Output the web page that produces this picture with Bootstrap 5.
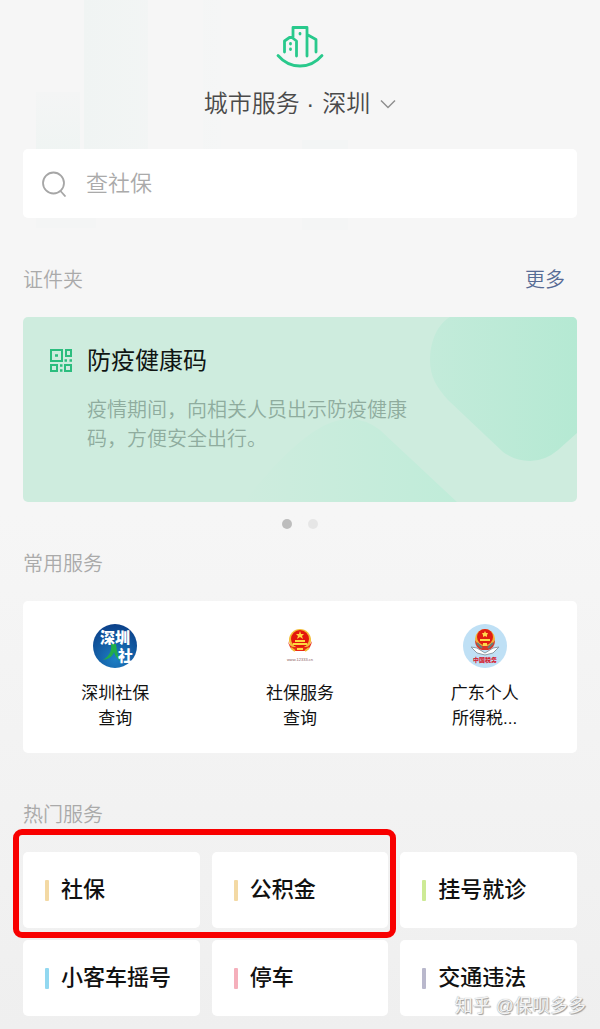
<!DOCTYPE html>
<html lang="zh-CN">
<head>
<meta charset="utf-8">
<meta name="viewport" content="width=device-width, initial-scale=1">
<title>城市服务</title>
<link href="https://cdn.jsdelivr.net/npm/bootstrap@5.3.0/dist/css/bootstrap.min.css" rel="stylesheet">
<style>
  body {
    font-family: "Liberation Sans", "Noto Sans CJK SC", sans-serif;
    font-weight: 350;
    color: #111;
    background: linear-gradient(#f6f6f6, #f6f6f6 50%, #efefef);
    min-height: 100vh;
  }
  .page { padding: 0 23px 12px; }
  .skyline { top: 0; left: 0; height: 240px; }
  .masthead { padding-top: 25px; }
  .city { font-size: 24px; line-height: 36px; color: #4a4a4a; margin: 18px 0 27px; }
  .city .form-select {
    width: auto; font: inherit; color: inherit; background-color: transparent;
    padding: 0 26px 0 8px; border: 0;
    background-image: url("data:image/svg+xml,%3Csvg xmlns='http://www.w3.org/2000/svg' viewBox='0 0 16 16'%3E%3Cpath d='M1 4.5l7 7 7-7' fill='none' stroke='%23909090' stroke-width='1.5'/%3E%3C/svg%3E");
    background-size: 16px; background-position: right 0 center;
  }
  .tile { background: #fff; border-radius: 5px; }
  .search { height: 69px; padding: 0 19px; gap: 19px; }
  .search .form-control { font-size: 22px; font-weight: 350; line-height: 36px; color: #333; box-shadow: none; }
  .search .form-control::placeholder { color: #aaa; }
  .section-head { font-size: 20px; line-height: 30px; color: #aaa; font-weight: 350; padding-bottom: 22px; }
  .wallet-head { padding-top: 47px; }
  .more { font-size: 20px; line-height: 30px; color: #576b95; padding-right: 12px; }
  .pass { background: #ceecde; border-radius: 5px; height: 185px; padding: 26px; gap: 14px; }
  .pass-title { font-size: 24px; line-height: 36px; font-weight: 400; color: #101513; }
  .pass-text { font-size: 20px; line-height: 29px; color: #8fac9e; max-width: 330px; margin: 17px 0 0; }
  .dots { padding: 17px 0 20px; }
  .dot { width: 10px; height: 10px; border: 0; padding: 0; border-radius: 50%; background: #e6e6e6; }
  .dot.active { background: #bdbdbd; }
  .often { padding: 22px 0; margin-bottom: 47px; }
  .often a { font-size: 17px; line-height: 25px; color: #111; font-weight: 400; }
  .often svg { margin-bottom: 12px; }
  .hot { grid-template-columns: repeat(3, 1fr); gap: 12px; }
  .hot .tile { height: 76px; padding-left: 22px; gap: 12px; font-size: 22px; line-height: 32px; font-weight: 500; color: #111; }
  .bar { width: 4px; height: 21px; border-radius: 1px; }
  .sand { background: #f3d9a4; }
  .lime { background: #cdea95; }
  .sky { background: #92d8f0; }
  .rose { background: #f5afbb; }
  .lilac { background: #b9b8cc; }
  .marked { grid-area: 1 / 1 / 2 / 3; inset: -23px -8px -10px -10px; border: 6px solid #f80000; border-radius: 9px; pointer-events: none; }
  .credit { right: 14px; bottom: 8px; font-size: 18px; line-height: 28px; font-weight: 400; color: #f4f4f4; text-shadow: 1px 1px 1px #999, 0 0 1px #999; }
</style>
</head>
<body>
<div class="page position-relative">
  <svg class="skyline position-absolute w-100" viewBox="0 0 600 240" preserveAspectRatio="none" aria-hidden="true">
    <defs>
      <linearGradient id="haze" x2="0" y2="1"><stop stop-color="#f4f5f5"/><stop offset="1" stop-color="#eef4f2"/></linearGradient>
      <linearGradient id="hazeSide"><stop stop-color="#f0f4f3"/><stop offset="1" stop-color="#f5f6f6"/></linearGradient>
    </defs>
    <path d="M36 92h44v78H36z" fill="url(#haze)"/>
    <path d="M84 0h64v170H84zM203 0h18v170h-18z" fill="url(#hazeSide)"/>
    <path d="M302 140h46v30h-46zM350 170q20-17 60-17t60 17z" fill="#f3f5f5"/>
    <path d="M302 218h46v12h-46zM36 218h60v10H36z" fill="#f4f5f5"/>
  </svg>

  <header class="masthead position-relative text-center">
    <svg class="d-block mx-auto" width="48" height="43" viewBox="0 0 48 43" fill="none" stroke="#29c98c" stroke-width="2.800" stroke-linecap="round" stroke-linejoin="round" aria-hidden="true">
      <path d="M2 30.500Q11 41 24 41T46 30.500"/>
      <path d="M8.500 27V16l5-3.500h2.500L20.500 16v15M17 12V2.500h14V31M31 9.500l9 5V27"/>
      <path d="M14.500 18.500v.5M14.500 24v.5M24 8.500v.5"/>
    </svg>
    <div class="city d-flex justify-content-center align-items-center">
      <label for="city">城市服务 ·</label>
      <select id="city" class="form-select"><option>深圳</option><option>广州</option></select>
    </div>
    <form class="search tile d-flex align-items-center">
      <label for="q" class="d-flex">
        <svg width="25" height="26" viewBox="0 0 25 26" fill="none" stroke="#a6a6a6" stroke-width="1.800" role="img" aria-label="搜索"><circle cx="11.500" cy="12" r="10.500"/><path d="M18.500 20l5 5.500"/></svg>
      </label>
      <input id="q" type="text" class="form-control border-0 p-0 bg-transparent" placeholder="查社保">
    </form>
  </header>

  <main>
    <section>
      <div class="wallet-head d-flex justify-content-between">
        <h2 class="section-head mb-0">证件夹</h2>
        <a class="more text-decoration-none" href="#">更多</a>
      </div>
      <div class="pass position-relative overflow-hidden d-flex">
        <svg class="position-absolute top-0 end-0 h-100" viewBox="0 0 554 185" preserveAspectRatio="xMaxYMid meet" aria-hidden="true">
          <defs>
            <linearGradient id="leaf"><stop stop-color="#c3ebda"/><stop offset="1" stop-color="#b5e9d3"/></linearGradient>
            <linearGradient id="hill"><stop stop-color="#ceecde"/><stop offset="1" stop-color="#c0ecd9"/></linearGradient>
          </defs>
          <path d="M427 0C412 9 407 28 407 43c0 17 7 28 18 40l55 52q12 9 27 9t28-11l19-17V0z" fill="url(#leaf)"/>
          <path d="M357 113l77 72H220C250 150 290 102 326 102q17 0 31 11z" fill="url(#hill)"/>
        </svg>
        <svg class="position-relative flex-shrink-0 mt-1" width="24" height="26" viewBox="0 0 24 26" fill="none" stroke="#2bbd7e" stroke-width="2" aria-hidden="true">
          <path d="M2 3h11v11H2zM17 3h5v6h-5zM2 18h6v6H2zM16 18h6v6h-6z"/>
          <path d="M6 8.500h3M15.500 13.500h2.500M20.500 13.500h2.500M11 18.500h2.500M11 23.500h2.500" stroke-width="2.500"/>
        </svg>
        <div class="position-relative">
          <h3 class="pass-title m-0 text-nowrap">防疫健康码</h3>
          <p class="pass-text">疫情期间，向相关人员出示防疫健康码，方便安全出行。</p>
        </div>
      </div>
      <div class="dots d-flex justify-content-center gap-3">
        <button type="button" class="dot active" aria-label="第一页"></button>
        <button type="button" class="dot" aria-label="第二页"></button>
      </div>
    </section>

    <section>
      <h2 class="section-head mb-0">常用服务</h2>
      <div class="often tile row gx-0 text-center">
        <a class="col text-decoration-none" href="#">
          <svg class="d-block mx-auto" width="46" height="46" viewBox="0 0 46 46" aria-hidden="true">
            <defs><radialGradient id="sea" cx=".5" cy=".8" r=".8"><stop stop-color="#1d7fc4"/><stop offset="1" stop-color="#0b4089"/></radialGradient></defs>
            <circle cx="23" cy="23" r="22" fill="url(#sea)"/>
            <path d="M19 21h5c1 8 2 11 4 17-4-3-5-6-6-9-2 5-5 7-11 8 6-4 9-8 8-16z" fill="#21ad49"/>
            <text x="8" y="20" font-size="15" font-weight="900" fill="#fff">深圳</text>
            <text x="26" y="38" font-size="15" font-weight="900" fill="#fff">社</text>
          </svg>
          深圳社保<br>查询
        </a>
        <a class="col text-decoration-none" href="#">
          <svg class="d-block mx-auto" width="46" height="46" viewBox="0 0 46 46" aria-hidden="true">
            <circle cx="23" cy="17" r="11" fill="#f3bd35"/>
            <circle cx="23" cy="16" r="9" fill="#e3170d"/>
            <path d="M11 18q1 7 6 10h12q5-3 6-10-3 6-6 6H17q-4 0-6-6z" fill="#e92b14"/>
            <path d="M23 8l1 3h3l-2 2 1 3-3-2-3 2 1-3-2-2h3zM16 20h14v2H16zM18 17h10v2H18zM20 25h6v2h-6z" fill="#ffd83f"/>
            <path d="M14 25l4 3M32 25l-4 3" stroke="#f3bd35" stroke-width="2"/>
            <text x="23" y="38" text-anchor="middle" font-size="4" fill="#8a6060">www.12333.cn</text>
          </svg>
          社保服务<br>查询
        </a>
        <a class="col text-decoration-none" href="#">
          <svg class="d-block mx-auto" width="46" height="46" viewBox="0 0 46 46" aria-hidden="true">
            <circle cx="23" cy="23" r="22" fill="#bfe0f5"/>
            <path d="M9 24l6 1 8 5 8-5 6-1-6 6-8 2-8-2z" fill="#fff" stroke="#8d9ba5"/>
            <circle cx="23" cy="16" r="10" fill="#f1b43a"/>
            <circle cx="23" cy="14" r="8" fill="#e01d12"/>
            <path d="M13 17q0 8 7 10h6q7-2 7-10-3 6-10 6t-10-6z" fill="#d9372a"/>
            <path d="M23 8l1 2h2l-1 2v2l-2-1-2 1v-2l-1-2h2zM18 16h10v2H18zM21 20h4v3h-4z" fill="#ffd94a"/>
            <path d="M15 20l5 5M31 20l-5 5" stroke="#6c7d77" stroke-width="2"/>
            <text x="23" y="39" text-anchor="middle" font-size="6" font-weight="900" fill="#d5202f">中国税务</text>
          </svg>
          广东个人<br>所得税...
        </a>
      </div>
    </section>

    <section>
      <h2 class="section-head mb-0">热门服务</h2>
      <div class="hot d-grid position-relative">
        <a class="tile d-flex align-items-center text-decoration-none" href="#"><span class="bar sand"></span>社保</a>
        <a class="tile d-flex align-items-center text-decoration-none" href="#"><span class="bar sand"></span>公积金</a>
        <a class="tile d-flex align-items-center text-decoration-none" href="#"><span class="bar lime"></span>挂号就诊</a>
        <a class="tile d-flex align-items-center text-decoration-none" href="#"><span class="bar sky"></span>小客车摇号</a>
        <a class="tile d-flex align-items-center text-decoration-none" href="#"><span class="bar rose"></span>停车</a>
        <a class="tile d-flex align-items-center text-decoration-none" href="#"><span class="bar lilac"></span>交通违法</a>
        <div class="marked position-absolute"></div>
      </div>
    </section>
  </main>
  <div class="credit position-absolute">知乎 @保呗多多</div>
</div>
<script src="https://cdn.jsdelivr.net/npm/bootstrap@5.3.0/dist/js/bootstrap.bundle.min.js"></script>
</body>
</html>
